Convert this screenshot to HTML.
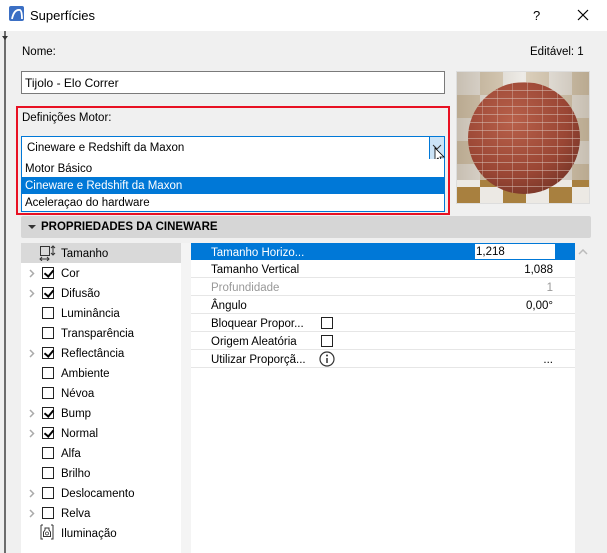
<!DOCTYPE html>
<html><head><meta charset="utf-8"><style>
*{box-sizing:border-box;margin:0;padding:0}
body{width:607px;height:553px;overflow:hidden;background:#f0f0f0;font-family:"Liberation Sans",sans-serif;font-size:11.5px;color:#000;position:relative}
.a{position:absolute}
.t{white-space:nowrap}
.cb{position:absolute;width:12px;height:12px;border:1px solid #222;background:#fff}
.chk::after{content:"";position:absolute;left:3px;top:0px;width:4px;height:7px;border:solid #000;border-width:0 2px 2px 0;transform:rotate(40deg)}
.arr{position:absolute;color:#aaa;font-size:11px}
.row{position:absolute;left:191px;width:384px;height:18px;border-bottom:1px solid #e6e6e6}
.row span{position:absolute;left:20px;top:4px;white-space:nowrap}
.row b{position:absolute;right:22px;top:4px;font-weight:normal}
</style></head><body>
<div class="a" style="left:0;top:0;width:607px;height:31px;background:#fff"></div>
<div class="a" style="left:9px;top:6px;width:15px;height:15px;background:#3b6fc4;border-radius:2px"></div>
<svg class="a" style="left:9px;top:6px" width="15" height="15"><path d="M3 13 Q5 3 11 4 Q13 5 13 13" stroke="#fff" stroke-width="1.8" fill="none"/></svg>
<div class="a t" style="left:30px;top:8px;font-size:13px">Superfícies</div>
<div class="a t" style="left:533px;top:8px;font-size:13px">?</div>
<svg class="a" style="left:577px;top:9px" width="12" height="12"><path d="M1 1L11 11M11 1L1 11" stroke="#000" stroke-width="1.2"/></svg>
<div class="a" style="left:4px;top:31px;width:2px;height:522px;background:#6d6d6d"></div>
<div class="a" style="left:2px;top:36px;border:3px solid transparent;border-top:4px solid #333"></div>
<div class="a t" style="left:22px;top:46px">Nome:</div>
<div class="a t" style="left:530px;top:46px">Editável: 1</div>
<div class="a" style="left:21px;top:71px;width:424px;height:23px;background:#fff;border:1px solid #7a7a7a"></div>
<div class="a t" style="left:25px;top:76px;font-size:12px">Tijolo - Elo Correr</div>
<div class="a" style="left:456px;top:71px;width:134px;height:133px;border:1px solid #ddd;background:repeating-conic-gradient(#a8803f 0 25%,#ece9e4 0 50%) 0 0/46px 46px;overflow:hidden">
<div style="position:absolute;left:0;top:0;width:132px;height:108px;background:linear-gradient(90deg,rgba(190,180,165,.8),rgba(238,236,232,.75) 50%,rgba(190,180,165,.8))"></div>
<div style="position:absolute;left:11px;top:10px;width:112px;height:112px;border-radius:50%;background:repeating-linear-gradient(0deg,transparent 0 7px,rgba(215,190,180,.55) 7px 8px),repeating-linear-gradient(90deg,transparent 0 14px,rgba(215,190,180,.4) 14px 15px),radial-gradient(circle at 40% 35%,#b8604a,#9a4634 55%,#5e2a1f)"></div>
</div>
<div class="a" style="left:16px;top:106px;width:434px;height:109px;border:2px solid #e81123"></div>
<div class="a t" style="left:22px;top:112px">Definições Motor:</div>
<div class="a" style="left:21px;top:136px;width:424px;height:24px;background:#fff;border:1px solid #0078d7"></div>
<div class="a t" style="left:27px;top:142px">Cineware e Redshift da Maxon</div>
<div class="a" style="left:429px;top:136px;width:16px;height:24px;background:#cce4f7;border:1px solid #0078d7"></div>
<svg class="a" style="left:432px;top:144px" width="20" height="24"><path d="M1 1l4 4 4-4" stroke="#333" fill="none"/><path d="M3 4v13l3-3 2 5 2-1-2-5h4z" fill="#fff" stroke="#000" stroke-width=".8"/></svg>
<div class="a" style="left:21px;top:159px;width:424px;height:53px;background:#fff;border:1px solid #0078d7;border-top:none"></div>
<div class="a t" style="left:25px;top:163px">Motor Básico</div>
<div class="a" style="left:22px;top:177px;width:422px;height:17px;background:#0078d7"></div>
<div class="a t" style="left:25px;top:180px;color:#fff">Cineware e Redshift da Maxon</div>
<div class="a t" style="left:25px;top:197px">Aceleraçao do hardware</div>
<div class="a" style="left:21px;top:216px;width:570px;height:22px;background:#d6d6d6;border-radius:2px"></div>
<div class="a" style="left:28px;top:225px;border:4px solid transparent;border-top:4px solid #333"></div>
<div class="a t" style="left:41px;top:221px;font-weight:bold">PROPRIEDADES DA CINEWARE</div>
<div class="a" style="left:21px;top:243px;width:160px;height:310px;background:#fff"></div>
<div class="a" style="left:181px;top:243px;width:10px;height:310px;background:#f4f4f4"></div>
<div class="a" style="left:191px;top:243px;width:384px;height:310px;background:#fff"></div>
<div class="a" style="left:21px;top:243px;width:160px;height:20px;background:#d9d9d9"></div>
<svg class="a" style="left:39px;top:245px" width="18" height="16"><rect x="1.5" y="1.5" width="9" height="9" fill="none" stroke="#333"/><path d="M14 1v9M12 3l2-2 2 2M12 8l2 2 2-2M1 14h9M3 12l-2 2 2 2M8 12l2 2-2 2" stroke="#333" fill="none"/></svg>
<div class="a t" style="left:61px;top:248px">Tamanho</div>
<div id="L"></div>
<svg class="a" style="left:40px;top:524px" width="14" height="16"><path d="M1 1h2M1 1v14h2M13 1h-2M13 1v14h-2" stroke="#333" fill="none"/><path d="M5 4h4v2l1.5 2v4.5h-7V8L5 6z" fill="none" stroke="#333"/><circle cx="7" cy="9.5" r="1.5" fill="none" stroke="#333" stroke-width=".7"/></svg>
<div class="a t" style="left:61px;top:528px">Iluminação</div>
<div class="a" style="left:191px;top:243px;width:384px;height:17px;background:#0078d7"></div>
<div class="a t" style="left:211px;top:247px;color:#fff">Tamanho Horizo...</div>
<div class="a" style="left:475px;top:244px;width:80px;height:15px;background:#fff"></div>
<div class="a t" style="left:476px;top:246px">1,218</div>
<div class="row" style="top:260px"><span>Tamanho Vertical</span><b>1,088</b></div>
<div class="row" style="top:278px;color:#999"><span>Profundidade</span><b>1</b></div>
<div class="row" style="top:296px"><span>Ângulo</span><b>0,00°</b></div>
<div class="row" style="top:314px"><span>Bloquear Propor...</span></div>
<div class="row" style="top:332px"><span>Origem Aleatória</span></div>
<div class="row" style="top:350px"><span>Utilizar Proporçã...</span><b>...</b></div>
<div class="cb" style="left:321px;top:317px"></div>
<div class="cb" style="left:321px;top:335px"></div>
<svg class="a" style="left:319px;top:351px" width="16" height="16"><circle cx="8" cy="8" r="7" fill="none" stroke="#333" stroke-width="1.2"/><path d="M8 7v5" stroke="#333" stroke-width="1.5"/><circle cx="8" cy="4.5" r="1" fill="#333"/></svg>
<div class="a" style="left:575px;top:243px;width:16px;height:310px;background:#f0f0f0"></div>
<svg class="a" style="left:578px;top:249px" width="10" height="6"><path d="M1 5l4-4 4 4" stroke="#bbb" stroke-width="1.5" fill="none"/></svg>
<script>
var items=[["Cor",1,1],["Difusão",1,1],["Luminância",0,0],["Transparência",0,0],["Reflectância",1,1],["Ambiente",0,0],["Névoa",0,0],["Bump",1,1],["Normal",1,1],["Alfa",0,0],["Brilho",0,0],["Deslocamento",1,0],["Relva",1,0]];
var h="";items.forEach(function(it,i){var y=263+i*20;
if(it[1])h+='<svg class="a" style="left:29px;top:'+(y+6)+'px" width="6" height="9"><path d="M1 1l3.5 3.5L1 8" stroke="#aaa" stroke-width="1.5" fill="none"/></svg>';
h+='<div class="cb'+(it[2]?' chk':'')+'" style="left:42px;top:'+(y+4)+'px"></div>';
h+='<div class="a t" style="left:61px;top:'+(y+5)+'px">'+it[0]+'</div>';});
document.getElementById("L").innerHTML=h;
</script>
</body></html>
